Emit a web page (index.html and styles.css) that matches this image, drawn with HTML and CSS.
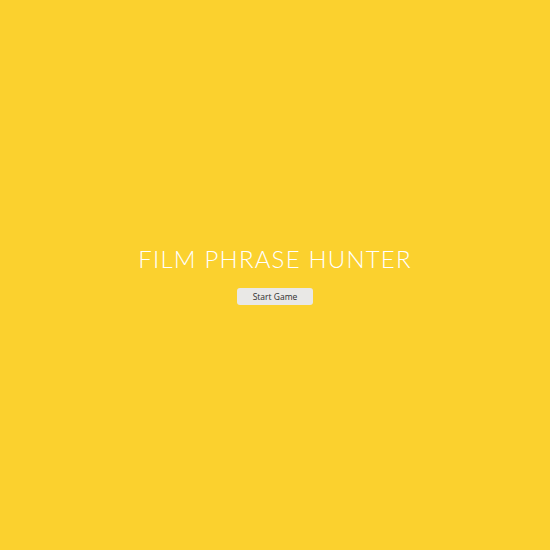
FILE: index.html
```html
<!DOCTYPE html>
<html>
<head>
<meta charset="utf-8">
<link rel="stylesheet" href="styles.css">
</head>
<body>
<main class="overlay">
  <h2 class="title">FILM PHRASE HUNTER</h2>
  <button class="btn-reset">Start Game</button>
</main>
</body>
</html>
```
FILE: styles.css
```css
html, body {
  margin: 0;
  height: 100%;
}
body {
  background: #fbd12e;
  font-family: "Open Sans", "Liberation Sans", sans-serif;
}
.overlay {
  height: 100%;
  display: flex;
  flex-direction: column;
  align-items: center;
  justify-content: center;
  padding-top: 2px;
  box-sizing: border-box;
}
.title {
  margin: 0 0 17px;
  color: #ffffff;
  font-family: "Lato", "Open Sans", sans-serif;
  font-weight: 300;
  font-size: 24px;
  letter-spacing: 1.2px;
  line-height: 1;
}
.btn-reset {
  width: 76px;
  height: 17px;
  padding: 0;
  border: none;
  border-radius: 3px;
  background: #e9e8e6;
  color: #2e2e2e;
  font-family: "Open Sans", sans-serif;
  font-size: 8.5px;
  line-height: 17px;
}
```
